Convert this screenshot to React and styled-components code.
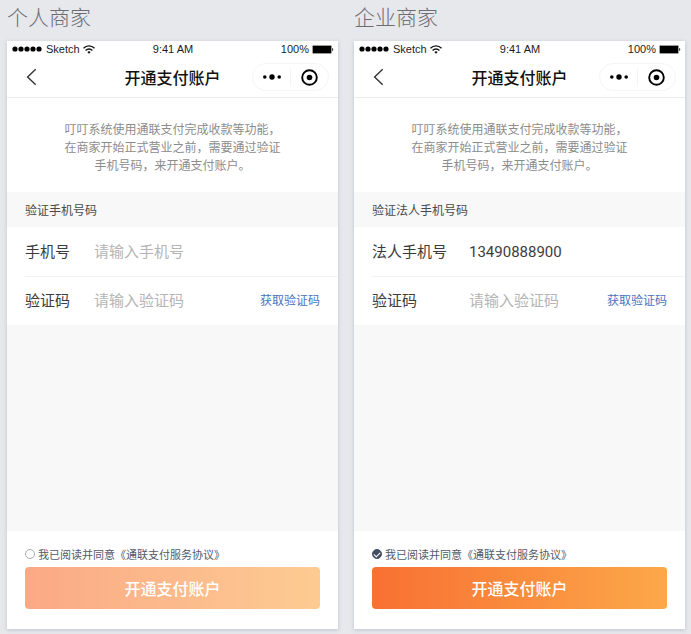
import { useState } from 'react'
import styled, { createGlobalStyle } from 'styled-components'

const GlobalStyle = createGlobalStyle`
	* {
		box-sizing: border-box;
	}

	body {
		margin: 0;
		background-color: #e7e8ec;
		font-family: 'Noto Sans CJK SC', sans-serif;
		color: #3c3c3c;
	}

	button, input {
		font-family: inherit;
	}
`

const Board = styled.main`
	display: flex;
	gap: 16px;
	min-height: 100vh;
	padding: 0 6px 5px 7px;
`

const Artboard = styled.section`
	display: flex;
	flex: 1;
	flex-direction: column;
	min-width: 0;
`

const ArtboardName = styled.h2`
	margin: 0;
	font-size: 21px;
	font-weight: 300;
	line-height: 32px;
	height: 41px;
	color: #6c6d70;
`

const Screen = styled.div`
	display: flex;
	flex: 1;
	flex-direction: column;
	background-color: #f8f8f8;
	box-shadow: 0 1px 4px rgba(120, 135, 165, 0.4);
`

const StatusBar = styled.div`
	display: grid;
	grid-template-columns: 1fr auto 1fr;
	align-items: center;
	height: 16px;
	padding: 0 4px 0 5px;
	background-color: white;
	font-family: 'Liberation Sans', sans-serif;
	font-size: 11px;
	line-height: 16px;
	color: #1c1c1c;
`

const StatusGroup = styled.div`
	display: flex;
	align-items: center;
	justify-content: ${(props) => (props.$end ? 'flex-end' : 'flex-start')};
	gap: 3px;
`

const NavBar = styled.header`
	display: grid;
	grid-template-columns: 1fr auto 1fr;
	align-items: center;
	height: 41px;
	padding: 0 9px;
	background-color: white;
	border-bottom: 1px solid #ececec;
`

const BackButton = styled.button`
	display: flex;
	justify-self: start;
	padding: 2px 10px;
	border: 0;
	background: none;
`

const NavTitle = styled.h1`
	margin: 0;
	font-size: 16px;
	font-weight: 500;
	line-height: 24px;
	color: #111;
`

const Capsule = styled.div`
	display: flex;
	justify-self: end;
	align-items: center;
	width: 77px;
	height: 28px;
	border: 1px solid #f5f5f5;
	border-radius: 14px;
`

const CapsuleButton = styled.button`
	display: flex;
	flex: 1;
	align-items: center;
	justify-content: center;
	height: 18px;
	padding: 0;
	border: 0;
	background: none;

	& + & {
		border-left: 1px solid #f5f5f5;
	}
`

const Notice = styled.p`
	margin: 0;
	padding: 22px 16px 18px;
	background-color: white;
	font-size: 12px;
	line-height: 18px;
	text-align: center;
	color: #8c8c8c;
`

const SectionTitle = styled.h3`
	margin: 0;
	padding: 0 18px;
	font-size: 12px;
	font-weight: 400;
	line-height: 35px;
	color: #4a4a4a;
`

const Fields = styled.div`
	padding-left: 18px;
	background-color: white;
	font-family: Roboto, 'Noto Sans CJK SC', sans-serif;
`

const Field = styled.div`
	display: flex;
	align-items: center;
	height: 49px;
	padding-right: 18px;

	& + & {
		border-top: 1px solid #f3f3f3;
	}
`

const FieldLabel = styled.label`
	flex: none;
	width: ${(props) => (props.$wide ? '97px' : '69px')};
	font-size: 15px;
	line-height: 24px;
`

const FieldInput = styled.input`
	flex: 1;
	min-width: 0;
	height: 24px;
	padding: 0;
	border: 0;
	outline: 0;
	background: none;
	font-size: 15px;
	color: #3c3c3c;

	&::placeholder {
		color: #b5b5b5;
	}
`

const CodeButton = styled.button`
	flex: none;
	padding: 0;
	border: 0;
	background: none;
	font-size: 12px;
	line-height: 24px;
	color: #4a73c0;
`

const BottomBar = styled.footer`
	display: flex;
	flex-direction: column;
	gap: 5px;
	margin-top: auto;
	padding: 15px 18px 20px;
	background-color: white;
`

const Agreement = styled.label`
	display: flex;
	align-items: center;
	gap: 3px;
	font-size: 11px;
	line-height: 16px;
	white-space: nowrap;
	color: #515a69;
`

const RoundCheckbox = styled.input`
	appearance: none;
	display: grid;
	place-items: center;
	flex: none;
	width: 10px;
	height: 10px;
	margin: 0;
	border: 1px solid #a9a9a9;
	border-radius: 50%;

	&:checked {
		border-color: #434e60;
		background-color: #434e60;
	}

	&:checked::after {
		content: '';
		width: 5px;
		height: 3px;
		border: solid white;
		border-width: 0 0 1px 1px;
		transform: rotate(-45deg);
	}
`

const SubmitButton = styled.button`
	height: 42px;
	padding: 0;
	border: 0;
	border-radius: 4px;
	background: linear-gradient(90deg, #f87032, #fca849);
	font-size: 16px;
	font-weight: 500;
	line-height: 24px;
	color: white;

	&:disabled {
		background: linear-gradient(90deg, #fba985, #fdcb92);
	}
`

const SignalIcon = () => (
	<svg width="31" height="6" viewBox="0 0 31 6" aria-hidden="true">
		{[3, 9, 15, 21, 27].map((x) => <circle key={x} cx={x} cy="3" r="2.6" fill="#000" />)}
	</svg>
)

const WifiIcon = () => (
	<svg width="12" height="9" viewBox="0 0 12 9" fill="none" stroke="#111" strokeWidth="1.4" aria-hidden="true">
		<path d="M0.5 3.3C3.6 0.1 8.4 0.1 11.5 3.3" />
		<path d="M2.6 5.4C4.5 3.5 7.5 3.5 9.4 5.4" />
		<path d="M4.3 6.9C5.3 6 6.7 6 7.7 6.9L6 8.8Z" fill="#111" stroke="none" />
	</svg>
)

const BatteryIcon = () => (
	<svg width="22" height="9" viewBox="0 0 22 9" aria-hidden="true">
		<rect x="0.3" y="0.3" width="19.4" height="8.4" rx="1" fill="#777" />
		<rect x="1" y="1" width="18" height="7" fill="#000" />
		<path d="M20.3 2.8C21.6 3.2 21.6 5.8 20.3 6.2Z" fill="#000" />
	</svg>
)

const BackIcon = () => (
	<svg width="11" height="18" viewBox="0 0 11 18" fill="none" stroke="#333" strokeWidth="1.4" aria-hidden="true">
		<path d="M9.7 1.3L1.6 9L9.7 16.7" />
	</svg>
)

const MoreIcon = () => (
	<svg width="18" height="6" viewBox="0 0 18 6" aria-hidden="true">
		<circle cx="1.8" cy="3" r="1.8" />
		<circle cx="9" cy="3" r="2.7" />
		<circle cx="16.2" cy="3" r="1.8" />
	</svg>
)

const TargetIcon = () => (
	<svg width="17" height="17" viewBox="0 0 17 17" aria-hidden="true">
		<circle cx="8.5" cy="8.5" r="7.3" fill="none" stroke="#000" strokeWidth="1.9" />
		<circle cx="8.5" cy="8.5" r="2.8" />
	</svg>
)

const AccountScreen = ({ id, name, sectionTitle, phoneLabel, phone: initialPhone = '', isAgreed = false, isWide }) => {

	const [phone, setPhone] = useState(initialPhone);
	const [code, setCode] = useState('');
	const [agreed, setAgreed] = useState(isAgreed);

	return (
		<Artboard>
			<ArtboardName>{name}</ArtboardName>

			<Screen>
				<StatusBar>
					<StatusGroup>
						<SignalIcon />
						<span>Sketch</span>
						<WifiIcon />
					</StatusGroup>
					<span>9:41 AM</span>
					<StatusGroup $end>
						<span>100%</span>
						<BatteryIcon />
					</StatusGroup>
				</StatusBar>

				<NavBar>
					<BackButton type="button" aria-label="返回"><BackIcon /></BackButton>
					<NavTitle>开通支付账户</NavTitle>
					<Capsule>
						<CapsuleButton type="button" aria-label="更多"><MoreIcon /></CapsuleButton>
						<CapsuleButton type="button" aria-label="关闭"><TargetIcon /></CapsuleButton>
					</Capsule>
				</NavBar>

				<Notice>
					叮叮系统使用通联支付完成收款等功能，<br />
					在商家开始正式营业之前，需要通过验证<br />
					手机号码，来开通支付账户。
				</Notice>

				<SectionTitle>{sectionTitle}</SectionTitle>

				<Fields>
					<Field>
						<FieldLabel htmlFor={`${id}-phone`} $wide={isWide}>{phoneLabel}</FieldLabel>
						<FieldInput
							id={`${id}-phone`}
							type="tel"
							placeholder="请输入手机号"
							value={phone}
							onChange={(e) => setPhone(e.target.value)}
						/>
					</Field>
					<Field>
						<FieldLabel htmlFor={`${id}-code`} $wide={isWide}>验证码</FieldLabel>
						<FieldInput
							id={`${id}-code`}
							type="text"
							placeholder="请输入验证码"
							value={code}
							onChange={(e) => setCode(e.target.value)}
						/>
						<CodeButton type="button">获取验证码</CodeButton>
					</Field>
				</Fields>

				<BottomBar>
					<Agreement>
						<RoundCheckbox type="checkbox" checked={agreed} onChange={(e) => setAgreed(e.target.checked)} />
						我已阅读并同意《通联支付服务协议》
					</Agreement>
					<SubmitButton type="button" disabled={!agreed}>开通支付账户</SubmitButton>
				</BottomBar>
			</Screen>
		</Artboard>
	)
}

const App = () => (
	<>
		<GlobalStyle />
		<Board>
			<AccountScreen
				id="personal"
				name="个人商家"
				sectionTitle="验证手机号码"
				phoneLabel="手机号"
			/>
			<AccountScreen
				id="company"
				name="企业商家"
				sectionTitle="验证法人手机号码"
				phoneLabel="法人手机号"
				phone="13490888900"
				isAgreed
				isWide
			/>
		</Board>
	</>
)

export default App;
